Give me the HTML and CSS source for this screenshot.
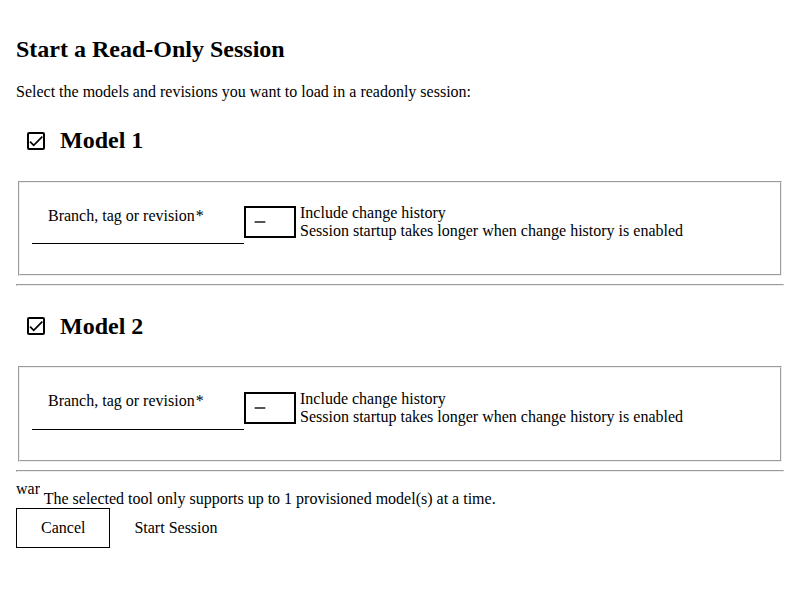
FILE: index.html
```html
<!DOCTYPE html>
<html lang="en">
<head>
<meta charset="utf-8">
<meta name="viewport" content="width=device-width, initial-scale=1">
<title>Start a Read-Only Session</title>
<link rel="stylesheet" href="styles.css">
</head>
<body>
<main>
  <h2>Start a Read-Only Session</h2>
  <p>Select the models and revisions you want to load in a readonly session:</p>
  <form>
    <section>
      <h2 class="model-title">
        <span class="checkbox">
          <input type="checkbox" id="model-1" checked>
          <svg viewBox="0 0 24 24" aria-hidden="true"><path d="M1.73,12.91 8.1,19.28 22.79,4.59"/></svg>
        </span>
        <label for="model-1">Model 1</label>
      </h2>
      <fieldset>
        <div class="options">
          <div class="field">
            <label for="revision-1">Branch, tag or revision<span class="required">*</span></label>
            <input type="text" id="revision-1" required>
          </div>
          <div class="history">
            <span class="switch">
              <input type="checkbox" role="switch" id="history-1">
              <svg viewBox="0 0 24 24" aria-hidden="true"><path d="M20 13H4v-2h16v2z"/></svg>
            </span>
            <label for="history-1">Include change history<br>Session startup takes longer when change history is enabled</label>
          </div>
        </div>
      </fieldset>
      <hr>
    </section>
    <section>
      <h2 class="model-title">
        <span class="checkbox">
          <input type="checkbox" id="model-2" checked>
          <svg viewBox="0 0 24 24" aria-hidden="true"><path d="M1.73,12.91 8.1,19.28 22.79,4.59"/></svg>
        </span>
        <label for="model-2">Model 2</label>
      </h2>
      <fieldset>
        <div class="options">
          <div class="field">
            <label for="revision-2">Branch, tag or revision<span class="required">*</span></label>
            <input type="text" id="revision-2" required>
          </div>
          <div class="history">
            <span class="switch">
              <input type="checkbox" role="switch" id="history-2">
              <svg viewBox="0 0 24 24" aria-hidden="true"><path d="M20 13H4v-2h16v2z"/></svg>
            </span>
            <label for="history-2">Include change history<br>Session startup takes longer when change history is enabled</label>
          </div>
        </div>
      </fieldset>
      <hr>
    </section>
    <div class="notice"><span class="notice-icon">war</span> The selected tool only supports up to 1 provisioned model(s) at a time.</div>
    <div class="actions">
      <button type="button" class="outlined">Cancel</button>
      <button type="submit">Start Session</button>
    </div>
  </form>
</main>
</body>
</html>
```
FILE: styles.css
```css
* {
  box-sizing: border-box;
}

body {
  margin: 0;
  padding: 16px;
  background: #fff;
  color: #000;
  font-family: "Liberation Serif", "Times New Roman", serif;
  font-size: 16px;
}

.model-title {
  display: flex;
  align-items: center;
  gap: 4px;
}

.checkbox,
.switch {
  display: grid;
  flex: none;
  place-items: center;
}

.checkbox > *,
.switch > *,
.field > * {
  grid-area: 1 / 1;
}

.checkbox {
  width: 40px;
  height: 40px;
}

.checkbox input {
  appearance: none;
  width: 18px;
  height: 18px;
  margin: 0;
  border: 2px solid #000;
  border-radius: 2px;
}

.checkbox svg {
  width: 14px;
  height: 14px;
  fill: none;
  stroke: #000;
  stroke-width: 3;
  pointer-events: none;
  visibility: hidden;
}

.checkbox input:checked + svg {
  visibility: visible;
}

.options {
  display: flex;
  align-items: flex-start;
  padding-bottom: 20px;
}

.field {
  display: grid;
  flex: none;
  align-items: center;
  width: 212px;
  height: 56px;
  border-bottom: 1px solid #000;
}

.field label {
  padding: 0 16px;
}

.field input {
  width: 100%;
  height: 100%;
  padding: 0 16px;
  border: 0;
  background: transparent;
  font: inherit;
}

.required {
  margin-left: 1px;
}

.history {
  display: flex;
  align-items: center;
  gap: 4px;
  padding-top: 16px;
}

.switch input {
  appearance: none;
  width: 52px;
  height: 32px;
  margin: 0;
  border: 2px solid #000;
}

.switch svg {
  justify-self: start;
  width: 16px;
  height: 16px;
  margin-left: 8px;
  fill: #000;
  pointer-events: none;
}

.notice-icon {
  display: inline-block;
  width: 24px;
  height: 24px;
  overflow: hidden;
}

.actions {
  display: flex;
}

button {
  height: 40px;
  padding: 0 24px;
  border: 0;
  background: transparent;
  color: inherit;
  font: inherit;
}

.outlined {
  border: 1px solid #000;
}
```
